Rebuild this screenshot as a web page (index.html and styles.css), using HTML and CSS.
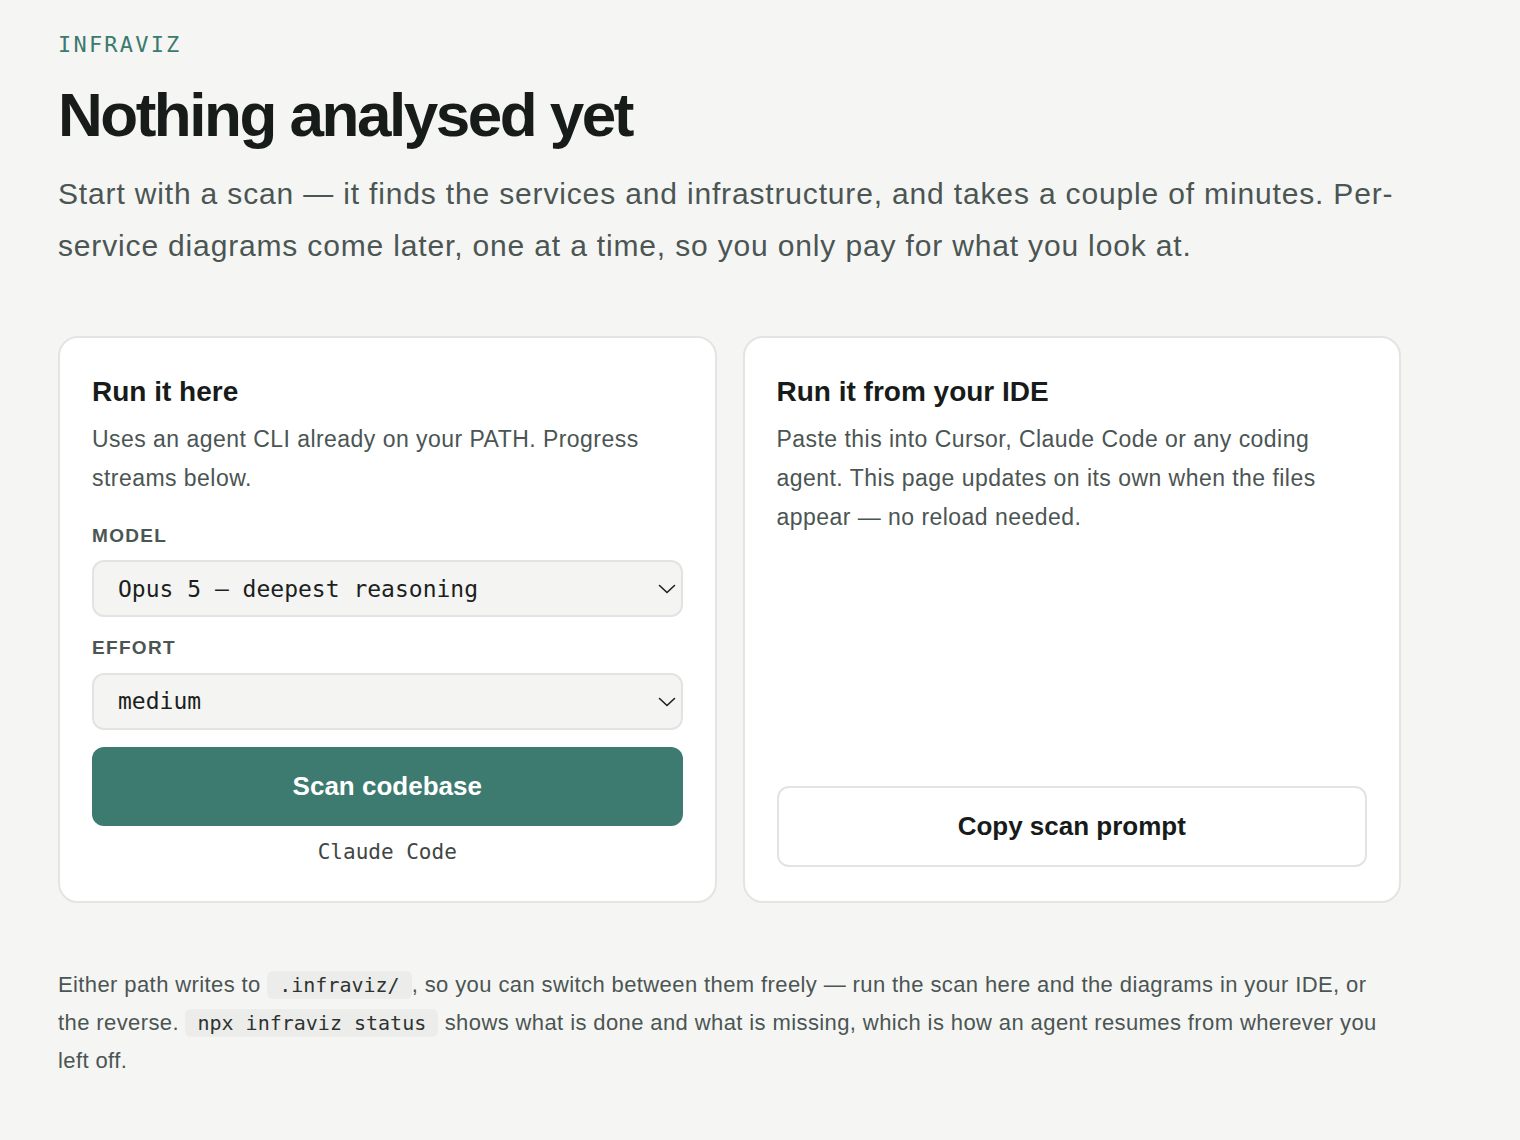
FILE: index.html
```html
<!DOCTYPE html>
<html lang="en">
<head>
  <meta charset="UTF-8" />
  <meta name="viewport" content="width=device-width, initial-scale=1" />
  <title>Infraviz</title>
  <link rel="stylesheet" href="styles.css">
</head>
<body>

<main class="page">
  <p class="eyebrow">INFRAVIZ</p>
  <h1>Nothing analysed yet</h1>
  <p class="lead">Start with a scan — it finds the services and infrastructure, and takes a couple of minutes. Per-service diagrams come later, one at a time, so you only pay for what you look at.</p>

  <div class="paths">
    <section class="card">
      <h2>Run it here</h2>
      <p class="card-text">Uses an agent CLI already on your PATH. Progress streams below.</p>

      <label class="field-label" for="model">Model</label>
      <div class="select-wrap">
        <select id="model">
          <option>Opus 5 — deepest reasoning</option>
          <option>Sonnet 5 — balanced</option>
        </select>
        <svg class="chevron" width="18" height="10" viewBox="0 0 18 10"><path d="M1.5 1.5 L9 8.5 L16.5 1.5" fill="none" stroke="#1b1f1e" stroke-width="1.6" stroke-linecap="round" stroke-linejoin="round"/></svg>
      </div>

      <label class="field-label" for="effort">Effort</label>
      <div class="select-wrap">
        <select id="effort">
          <option>low</option>
          <option selected>medium</option>
          <option>high</option>
        </select>
        <svg class="chevron" width="18" height="10" viewBox="0 0 18 10"><path d="M1.5 1.5 L9 8.5 L16.5 1.5" fill="none" stroke="#1b1f1e" stroke-width="1.6" stroke-linecap="round" stroke-linejoin="round"/></svg>
      </div>

      <button class="btn-primary">Scan codebase</button>
      <p class="agent-name">Claude Code</p>
    </section>

    <section class="card card-ide">
      <h2>Run it from your IDE</h2>
      <p class="card-text">Paste this into Cursor, Claude Code or any coding agent. This page updates on its own when the files appear — no reload needed.</p>
      <button class="btn-secondary">Copy scan prompt</button>
    </section>
  </div>

  <p class="note">Either path writes to <code>.infraviz/</code>, so you can switch between them freely — run the scan here and the diagrams in your IDE, or the reverse. <code>npx infraviz status</code> shows what is done and what is missing, which is how an agent resumes from wherever you left off.</p>
</main>

</body>
</html>
```

FILE: styles.css
```css
body {
  margin: 0;
  background: #f5f5f3;
  color: #1b1f1e;
  font-family: 'Liberation Sans', Arial, Helvetica, sans-serif;
}
.page {
  width: 1343px;
  padding: 30px 58px 40px;
}
.eyebrow {
  margin: 0;
  font-family: 'DejaVu Sans Mono', monospace;
  font-size: 22px;
  line-height: 1.4;
  letter-spacing: 0.1em;
  color: #3b7a6e;
}
h1 {
  margin: 20px 0 19px;
  font-size: 62px;
  line-height: 1.1;
  letter-spacing: -0.04em;
  font-weight: 700;
  color: #171b1a;
}
.lead {
  margin: 0 0 64px;
  font-size: 30px;
  line-height: 52px;
  letter-spacing: 0.028em;
  color: #4b5553;
}
.paths {
  display: grid;
  grid-template-columns: 1fr 1fr;
  gap: 26px;
  margin-bottom: 63px;
}
.card {
  display: flex; flex-direction: column;
  background: #fff;
  border: 2px solid #e3e5e2;
  border-radius: 20px;
  padding: 37px 32px 34px;
}
.card h2 {
  margin: 0 0 11px;
  font-size: 28px;
  line-height: 1.2;
  color: #171b1a;
}
.card-text {
  margin: 0;
  font-size: 23px;
  line-height: 39px;
  letter-spacing: 0.02em;
  color: #4b5553;
}
.field-label {
  display: block;
  margin: 26px 0 12px;
  font-size: 19px;
  line-height: 1.3;
  font-weight: 700;
  letter-spacing: 0.07em;
  text-transform: uppercase;
  color: #4b5553;
}
.select-wrap + .field-label { margin-top: 19px; }
.select-wrap { position: relative; }
.select-wrap select {
  display: block;
  width: 100%; height: 57px;
  -webkit-appearance: none; appearance: none;
  background: #f4f4f2;
  border: 2px solid #e2e4e1;
  border-radius: 12px;
  padding: 0 44px 0 24px;
  font-family: 'DejaVu Sans Mono', monospace;
  font-size: 23px;
  color: #1b1f1e;
}
.chevron {
  position: absolute;
  right: 7px; top: 24px;
  pointer-events: none;
}
.btn-primary, .btn-secondary {
  width: 100%;
  border-radius: 12px;
  font-family: 'Liberation Sans', Arial, sans-serif;
  font-size: 26px; font-weight: 700;
  cursor: pointer;
}
.btn-primary {
  height: 79px;
  margin-top: 17px;
  background: #3d7a70; color: #fff;
  border: none;
}
.btn-secondary {
  height: 81px;
  margin-top: auto;
  background: #fff; color: #171b1a;
  border: 2px solid #e2e4e1;
}
.agent-name {
  margin: 12px 0 0;
  text-align: center;
  font-family: 'DejaVu Sans Mono', monospace;
  font-size: 21px;
  line-height: 1.4;
  color: #3f4644;
}
.note {
  margin: 0;
  font-size: 22px;
  line-height: 38px;
  letter-spacing: 0.018em;
  color: #4b5553;
}
.note code {
  font-family: 'DejaVu Sans Mono', monospace;
  font-size: 20px;
  letter-spacing: 0;
  background: #ecedea;
  border-radius: 6px;
  padding: 2px 12px;
  color: #2c3331;
}
```
